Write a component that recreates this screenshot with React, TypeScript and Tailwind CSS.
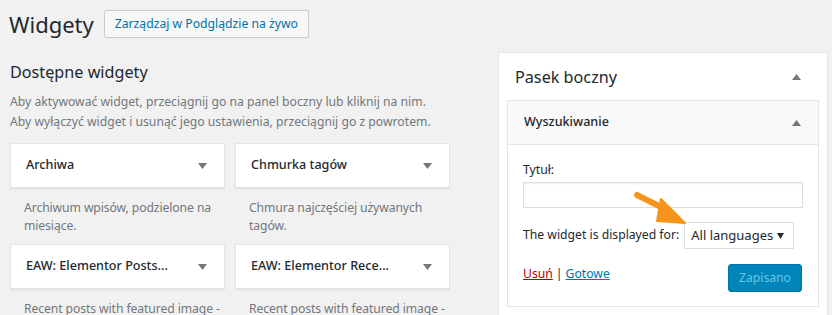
const font = { fontFamily: '"Segoe UI", "Noto Sans", "Open Sans", sans-serif' };

const widgets = [
  { title: "Archiwa", desc: "Archiwum wpisów, podzielone na miesiące." },
  { title: "Chmurka tagów", desc: "Chmura najczęściej używanych tagów." },
  { title: "EAW: Elementor Posts...", desc: "Recent posts with featured image - Elementor" },
  { title: "EAW: Elementor Rece...", desc: "Recent posts with featured image - Elementor" },
];

function Caret({ up }: { up?: boolean }) {
  return (
    <svg width="9" height="6" viewBox="0 0 9 6" className="shrink-0">
      <path d={up ? "M0 6 L4.5 0 L9 6 Z" : "M0 0 L9 0 L4.5 6 Z"} fill="#72777c" />
    </svg>
  );
}

export default function App() {
  return (
    <div
      className="w-[832px] h-[315px] overflow-hidden bg-[#f1f1f1] text-[12.2px] text-[#23282d] flex"
      style={font}
    >
      {/* Left column */}
      <div className="w-[498px] shrink-0 pl-[10px] pt-[10px]">
        <div className="flex items-center gap-[10px]">
          <h1 className="text-[22px] leading-[28px] font-normal -ml-[1px]">Widgety</h1>
          <button className="h-[28px] px-[10px] border border-[#ccc] bg-[#f7f7f7] rounded-[2px] text-[12.2px] text-[#0073aa] leading-[26px]">
            Zarządzaj w Podglądzie na żywo
          </button>
        </div>

        <h2 className="mt-[22px] text-[16.2px] leading-[24px] font-normal">Dostępne widgety</h2>
        <p className="mt-[8px] text-[#72777c] leading-[20px]">
          Aby aktywować widget, przeciągnij go na panel boczny lub kliknij na nim.
          <br />
          Aby wyłączyć widget i usunąć jego ustawienia, przeciągnij go z powrotem.
        </p>

        <div className="mt-[11px] grid grid-cols-[215px_215px] gap-x-[10px]">
          {widgets.map((w) => (
            <div key={w.title} className="mb-[9px]">
              <div className="h-[45px] bg-white shadow-[0_1px_1px_rgba(0,0,0,0.07)] border border-[#e5e5e5] flex items-center justify-between pl-[15px] pr-[17px]">
                <span className="font-medium text-[12.6px]">{w.title}</span>
                <Caret />
              </div>
              <p className="mt-[11px] pl-[14px] pr-0 text-[#72777c] leading-[18px] tracking-[-0.1px]">{w.desc}</p>
            </div>
          ))}
        </div>
      </div>

      {/* Right column: sidebar */}
      <div className="pt-[52px] w-[330px] shrink-0">
        <div className="bg-white border border-[#e5e5e5] shadow-[0_1px_1px_rgba(0,0,0,0.04)] h-[300px]">
          <div className="h-[47px] flex items-center justify-between pl-[16px] pr-[26px]">
            <h2 className="text-[16.2px] font-normal leading-[24px]">Pasek boczny</h2>
            <Caret up />
          </div>
          <div className="mx-[8px] border border-[#e5e5e5]">
            <div className="h-[44px] bg-[#f9f9f9] border-b border-[#e5e5e5] flex items-center justify-between pl-[16px] pr-[17px]">
              <span className="font-medium text-[12.6px]">Wyszukiwanie</span>
              <Caret up />
            </div>
            <div className="px-[15px] pt-[16px] pb-[14px] bg-white">
              <label className="block leading-[18px]">Tytuł:</label>
              <div className="mt-[3px] h-[26px] border border-[#ddd] shadow-[inset_0_1px_2px_rgba(0,0,0,0.07)]" />
              <div className="mt-[14px] flex items-center gap-[5px]">
                <span className="whitespace-nowrap">The widget is displayed for:</span>
                <div className="relative w-[110px] h-[27px] border border-[#ddd] flex items-center justify-between pl-[6px] pr-[9px] text-[13px] whitespace-nowrap">
                  <span>All languages</span>
                  <svg width="7" height="6" viewBox="0 0 7 6" className="shrink-0">
                    <path d="M0 0 L7 0 L3.5 6 Z" fill="#23282d" />
                  </svg>
                  {/* annotation arrow */}
                  <svg
                    width="60"
                    height="40"
                    viewBox="0 0 60 40"
                    className="absolute left-[-52px] top-[-34px]"
                  >
                    <path d="M4 6 L36 22" stroke="#f7941d" strokeWidth="6" strokeLinecap="round" />
                    <path d="M28 10 L52 34 L24 32 Z" fill="#f7941d" strokeLinejoin="round" stroke="#f7941d" strokeWidth="2" />
                  </svg>
                </div>
              </div>
              <div className="mt-[15px] flex items-center justify-between">
                <div className="-mt-[8px]">
                  <a className="text-[#a00] underline">Usuń</a>
                  <span className="mx-[3px]">|</span>
                  <a className="text-[#0073aa] underline">Gotowe</a>
                </div>
                <button className="h-[28px] px-[10px] bg-[#0085ba] border border-[#0073aa] rounded-[3px] text-[#66c6e4] text-[12.2px] mr-[1px]">
                  Zapisano
                </button>
              </div>
            </div>
          </div>
        </div>
      </div>
    </div>
  );
}
